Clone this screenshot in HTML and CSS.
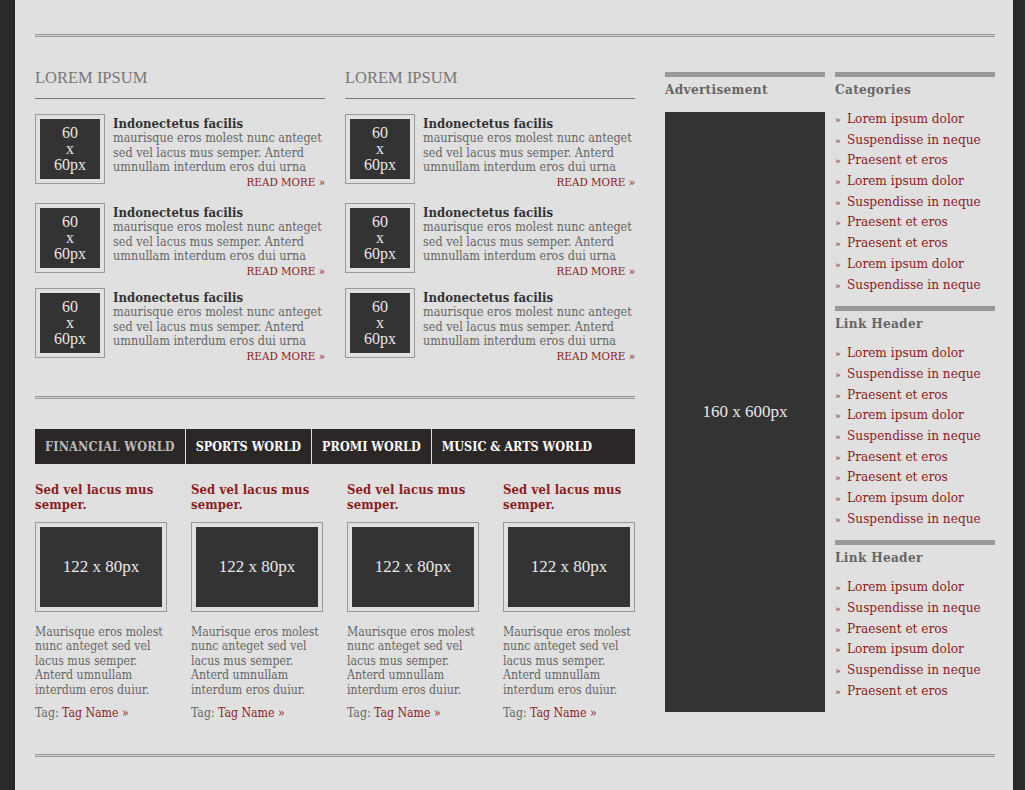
FILE: index.html
```html
<!DOCTYPE html>
<html lang="en">
<head>
    <meta charset="UTF-8">
    <meta name="viewport" content="width=device-width, initial-scale=1.0">
    <title>Magazine Layout</title>
    <link rel="stylesheet" href="styles.css">
</head>
<body>
    <div class="page">
        <div class="rule"></div>

        <div class="main">
            <div class="content">
                <div class="news">
                    <div class="news-col">
                        <h2 class="section-title">Lorem Ipsum</h2>
                        <div class="item">
                            <div class="thumb"><div class="thumb-inner">60<br>x<br>60px</div></div>
                            <div class="item-text">
                                <h3>Indonectetus facilis</h3>
                                <p>maurisque eros molest nunc anteget sed vel lacus mus semper. Anterd umnullam interdum eros dui urna</p>
                                <a class="more" href="#">Read more &raquo;</a>
                            </div>
                        </div>
                        <div class="item">
                            <div class="thumb"><div class="thumb-inner">60<br>x<br>60px</div></div>
                            <div class="item-text">
                                <h3>Indonectetus facilis</h3>
                                <p>maurisque eros molest nunc anteget sed vel lacus mus semper. Anterd umnullam interdum eros dui urna</p>
                                <a class="more" href="#">Read more &raquo;</a>
                            </div>
                        </div>
                        <div class="item">
                            <div class="thumb"><div class="thumb-inner">60<br>x<br>60px</div></div>
                            <div class="item-text">
                                <h3>Indonectetus facilis</h3>
                                <p>maurisque eros molest nunc anteget sed vel lacus mus semper. Anterd umnullam interdum eros dui urna</p>
                                <a class="more" href="#">Read more &raquo;</a>
                            </div>
                        </div>
                    </div>
                    <div class="news-col">
                        <h2 class="section-title">Lorem Ipsum</h2>
                        <div class="item">
                            <div class="thumb"><div class="thumb-inner">60<br>x<br>60px</div></div>
                            <div class="item-text">
                                <h3>Indonectetus facilis</h3>
                                <p>maurisque eros molest nunc anteget sed vel lacus mus semper. Anterd umnullam interdum eros dui urna</p>
                                <a class="more" href="#">Read more &raquo;</a>
                            </div>
                        </div>
                        <div class="item">
                            <div class="thumb"><div class="thumb-inner">60<br>x<br>60px</div></div>
                            <div class="item-text">
                                <h3>Indonectetus facilis</h3>
                                <p>maurisque eros molest nunc anteget sed vel lacus mus semper. Anterd umnullam interdum eros dui urna</p>
                                <a class="more" href="#">Read more &raquo;</a>
                            </div>
                        </div>
                        <div class="item">
                            <div class="thumb"><div class="thumb-inner">60<br>x<br>60px</div></div>
                            <div class="item-text">
                                <h3>Indonectetus facilis</h3>
                                <p>maurisque eros molest nunc anteget sed vel lacus mus semper. Anterd umnullam interdum eros dui urna</p>
                                <a class="more" href="#">Read more &raquo;</a>
                            </div>
                        </div>
                    </div>
                </div>

                <div class="rule rule-mid"></div>

                <ul class="tabs">
                    <li class="active">Financial World</li>
                    <li>Sports World</li>
                    <li>Promi World</li>
                    <li>Music &amp; Arts World</li>
                </ul>

                <div class="stories">
                    <div class="story">
                        <h4>Sed vel lacus mus semper.</h4>
                        <div class="pic"><div class="pic-inner">122 x 80px</div></div>
                        <p>Maurisque eros molest nunc anteget sed vel lacus mus semper. Anterd umnullam interdum eros duiur.</p>
                        <p class="tag">Tag: <a href="#">Tag Name &raquo;</a></p>
                    </div>
                    <div class="story">
                        <h4>Sed vel lacus mus semper.</h4>
                        <div class="pic"><div class="pic-inner">122 x 80px</div></div>
                        <p>Maurisque eros molest nunc anteget sed vel lacus mus semper. Anterd umnullam interdum eros duiur.</p>
                        <p class="tag">Tag: <a href="#">Tag Name &raquo;</a></p>
                    </div>
                    <div class="story">
                        <h4>Sed vel lacus mus semper.</h4>
                        <div class="pic"><div class="pic-inner">122 x 80px</div></div>
                        <p>Maurisque eros molest nunc anteget sed vel lacus mus semper. Anterd umnullam interdum eros duiur.</p>
                        <p class="tag">Tag: <a href="#">Tag Name &raquo;</a></p>
                    </div>
                    <div class="story">
                        <h4>Sed vel lacus mus semper.</h4>
                        <div class="pic"><div class="pic-inner">122 x 80px</div></div>
                        <p>Maurisque eros molest nunc anteget sed vel lacus mus semper. Anterd umnullam interdum eros duiur.</p>
                        <p class="tag">Tag: <a href="#">Tag Name &raquo;</a></p>
                    </div>
                </div>
            </div>

            <div class="sidebar">
                <div class="ad-col">
                    <h5 class="widget-title">Advertisement</h5>
                    <div class="ad">160 x 600px</div>
                </div>
                <div class="links-col">
                    <div class="widget">
                        <h5 class="widget-title">Categories</h5>
                        <ul class="links">
                            <li><a href="#">Lorem ipsum dolor</a></li>
                            <li><a href="#">Suspendisse in neque</a></li>
                            <li><a href="#">Praesent et eros</a></li>
                            <li><a href="#">Lorem ipsum dolor</a></li>
                            <li><a href="#">Suspendisse in neque</a></li>
                            <li><a href="#">Praesent et eros</a></li>
                            <li><a href="#">Praesent et eros</a></li>
                            <li><a href="#">Lorem ipsum dolor</a></li>
                            <li><a href="#">Suspendisse in neque</a></li>
                        </ul>
                    </div>
                    <div class="widget">
                        <h5 class="widget-title">Link Header</h5>
                        <ul class="links">
                            <li><a href="#">Lorem ipsum dolor</a></li>
                            <li><a href="#">Suspendisse in neque</a></li>
                            <li><a href="#">Praesent et eros</a></li>
                            <li><a href="#">Lorem ipsum dolor</a></li>
                            <li><a href="#">Suspendisse in neque</a></li>
                            <li><a href="#">Praesent et eros</a></li>
                            <li><a href="#">Praesent et eros</a></li>
                            <li><a href="#">Lorem ipsum dolor</a></li>
                            <li><a href="#">Suspendisse in neque</a></li>
                        </ul>
                    </div>
                    <div class="widget">
                        <h5 class="widget-title">Link Header</h5>
                        <ul class="links">
                            <li><a href="#">Lorem ipsum dolor</a></li>
                            <li><a href="#">Suspendisse in neque</a></li>
                            <li><a href="#">Praesent et eros</a></li>
                            <li><a href="#">Lorem ipsum dolor</a></li>
                            <li><a href="#">Suspendisse in neque</a></li>
                            <li><a href="#">Praesent et eros</a></li>
                        </ul>
                    </div>
                </div>
            </div>
        </div>

        <div class="rule rule-bottom"></div>
    </div>
</body>
</html>
```

FILE: styles.css
```css
body {
    margin: 0;
    padding: 0;
    background: #2a2a2a;
    font-family: "DejaVu Serif Condensed", "DejaVu Serif", serif;
    font-stretch: condensed;
    color: #666;
}

a {
    color: #8b1c1c;
    text-decoration: none;
}

ul {
    list-style: none;
    margin: 0;
    padding: 0;
}

h2, h3, h4, h5, p {
    margin: 0;
}

.page {
    width: 960px;
    margin-left: 15px;
    padding: 34px 18px 34px 20px;
    background: #e0e0e0;
    min-height: 722px;
}

/* double rule */
.rule {
    height: 1px;
    border-top: 1px solid #999;
    border-bottom: 1px solid #999;
    background: #cfcfcf;
}

.main {
    display: flex;
    margin-top: 35px;
}

.content {
    width: 600px;
}

.news {
    display: flex;
    gap: 20px;
}

.news-col {
    width: 290px;
}

.section-title {
    font-family: "Liberation Serif", serif;
    font-weight: normal;
    font-size: 16.5px;
    line-height: 20px;
    text-transform: uppercase;
    color: #777;
    margin-top: -4px;
    padding-bottom: 10px;
    border-bottom: 1px solid #777;
    margin-bottom: 15px;
}

.item {
    display: flex;
    height: 76px;
    margin-bottom: 13px;
}

.item:nth-child(3) {
    margin-bottom: 9px;
}

.item:last-child {
    margin-bottom: 0;
}

.thumb {
    width: 60px;
    height: 60px;
    padding: 4px;
    border: 1px solid #999;
    flex-shrink: 0;
}

.thumb-inner {
    height: 100%;
    background: #333;
    color: #e8e8e8;
    font-family: "Liberation Serif", serif;
    font-size: 16px;
    line-height: 16px;
    text-align: center;
    display: flex;
    align-items: center;
    justify-content: center;
}

.item-text {
    margin-left: 8px;
    padding-top: 2px;
    flex: 1;
    display: flex;
    flex-direction: column;
}

.item-text h3 {
    font-size: 13px;
    line-height: 15px;
    color: #333;
}

.item-text p {
    font-size: 12.5px;
    line-height: 14.5px;
    color: #666;
}

.more {
    align-self: flex-end;
    font-size: 11.5px;
    line-height: 15px;
    text-transform: uppercase;
}

.rule-mid {
    margin-top: 32px;
}

.tabs {
    display: flex;
    margin-top: 30px;
    height: 35px;
    background: #2b2727;
}

.tabs li {
    padding: 0 10px;
    border-right: 1px solid #ddd;
    color: #fff;
    font-weight: bold;
    font-size: 12.5px;
    line-height: 35px;
    text-transform: uppercase;
}

.tabs li.active {
    color: #bbb;
    letter-spacing: 0.2px;
}

.tabs li:last-child {
    border-right: none;
}

.stories {
    display: flex;
    gap: 24px;
    margin-top: 18px;
}

.story {
    width: 132px;
}

.story h4 {
    color: #8b1c1c;
    font-size: 13px;
    letter-spacing: 0.1px;
    line-height: 15px;
    height: 40px;
}

.pic {
    width: 122px;
    height: 80px;
    padding: 4px;
    border: 1px solid #999;
}

.pic-inner {
    height: 100%;
    background: #333;
    color: #e8e8e8;
    font-family: "Liberation Serif", serif;
    font-size: 17px;
    display: flex;
    align-items: center;
    justify-content: center;
}

.story p {
    font-size: 12.2px;
    line-height: 14.4px;
    color: #666;
    margin-top: 13px;
}

.story p.tag {
    margin-top: 9px;
    line-height: 14px;
}

.sidebar {
    display: flex;
    gap: 10px;
    margin-left: 30px;
    width: 330px;
}

.ad-col,
.links-col {
    width: 160px;
}

.widget-title {
    border-top: 5px solid #999;
    padding-top: 4px;
    font-size: 13.5px;
    letter-spacing: 0.3px;
    line-height: 16px;
    color: #666;
}

.ad {
    margin-top: 15px;
    height: 600px;
    background: #333;
    color: #e8e8e8;
    font-family: "Liberation Serif", serif;
    font-size: 17px;
    display: flex;
    align-items: center;
    justify-content: center;
}

.widget {
    margin-bottom: 12px;
}

.links {
    margin-top: 11px;
}

.links li {
    display: flex;
    align-items: baseline;
    height: 20.7px;
    font-size: 13.5px;
    line-height: 20.7px;
}

.links li::before {
    content: "\00bb";
    width: 12px;
    flex-shrink: 0;
    font-size: 10px;
    color: #8b1c1c;
}

.rule-bottom {
    margin-top: 34px;
}
```
